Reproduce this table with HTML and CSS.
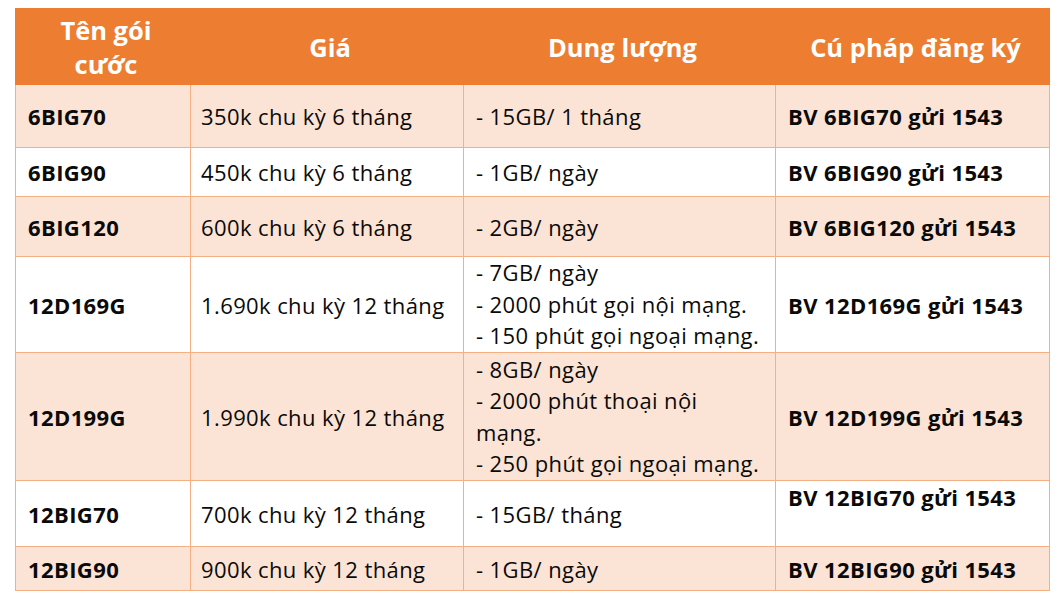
FILE: index.html
```html
<!DOCTYPE html>
<html lang="vi">
<head>
<meta charset="utf-8">
<title>Bảng gói cước</title>
<link rel="stylesheet" href="styles.css">
</head>
<body>
<table class="plans">
  <colgroup>
    <col class="c1"><col class="c2"><col class="c3"><col class="c4">
  </colgroup>
  <thead>
    <tr class="head">
      <th>Tên gói<br>cước</th>
      <th>Giá</th>
      <th>Dung lượng</th>
      <th>Cú pháp đăng ký</th>
    </tr>
  </thead>
  <tbody>
    <tr class="pink r1">
      <td class="name">6BIG70</td>
      <td>350k chu kỳ 6 tháng</td>
      <td>- 15GB/ 1 tháng</td>
      <td class="code">BV 6BIG70 gửi 1543</td>
    </tr>
    <tr class="white r2">
      <td class="name">6BIG90</td>
      <td>450k chu kỳ 6 tháng</td>
      <td>- 1GB/ ngày</td>
      <td class="code">BV 6BIG90 gửi 1543</td>
    </tr>
    <tr class="pink r3">
      <td class="name">6BIG120</td>
      <td>600k chu kỳ 6 tháng</td>
      <td>- 2GB/ ngày</td>
      <td class="code">BV 6BIG120 gửi 1543</td>
    </tr>
    <tr class="white r4">
      <td class="name">12D169G</td>
      <td>1.690k chu kỳ 12 tháng</td>
      <td class="multi">- 7GB/ ngày<br>- 2000 phút gọi nội mạng.<br>- 150 phút gọi ngoại mạng.</td>
      <td class="code">BV 12D169G gửi 1543</td>
    </tr>
    <tr class="pink r5">
      <td class="name">12D199G</td>
      <td>1.990k chu kỳ 12 tháng</td>
      <td class="multi">- 8GB/ ngày<br>- 2000 phút thoại nội<br>mạng.<br>- 250 phút gọi ngoại mạng.</td>
      <td class="code">BV 12D199G gửi 1543</td>
    </tr>
    <tr class="white r6">
      <td class="name">12BIG70</td>
      <td>700k chu kỳ 12 tháng</td>
      <td>- 15GB/ tháng</td>
      <td class="code top">BV 12BIG70 gửi 1543</td>
    </tr>
    <tr class="pink r7">
      <td class="name">12BIG90</td>
      <td>900k chu kỳ 12 tháng</td>
      <td>- 1GB/ ngày</td>
      <td class="code">BV 12BIG90 gửi 1543</td>
    </tr>
  </tbody>
</table>
</body>
</html>
```

FILE: styles.css
```css
html, body {
  margin: 0;
  padding: 0;
  background: #ffffff;
}

body {
  padding: 8px 0 0 15px;
  font-family: "Open Sans", "Noto Sans", sans-serif;
  color: #0a0a0a;
}

.plans {
  border-collapse: collapse;
  table-layout: fixed;
  width: 1034px;
}

.c1 { width: 175px; }
.c2 { width: 273px; }
.c3 { width: 312px; }
.c4 { width: 274px; }

.plans th,
.plans td {
  border: 1px solid #f4b083;
  padding: 0 6px 0 12px;
  vertical-align: middle;
  text-align: left;
  font-size: 22px;
  line-height: 32px;
  font-weight: 400;
  letter-spacing: 0.4px;
}

.plans td:nth-child(2) { padding-left: 10px; }

.head th {
  background: #ed7d31;
  border-color: #ed7d31;
  color: #ffffff;
  font-weight: 700;
  font-size: 25.5px;
  line-height: 34px;
  letter-spacing: 0;
  text-align: center;
  height: 75px;
}

.pink td { background: #fbe4d5; }
.white td { background: #ffffff; }

.name, .code { font-weight: 700 !important; }

.r4 .multi { line-height: 31.5px; }
.r5 .multi { line-height: 31.5px; }

.top { vertical-align: top !important; }
.top { padding-top: 0 !important; }

.r1 td { height: 62px; }
.r2 td { height: 48px; }
.r3 td { height: 59px; }
.r4 td { height: 95px; }
.r5 td { height: 127px; }
.r6 td { height: 65px; }
.r7 td { height: 43px; }
```
